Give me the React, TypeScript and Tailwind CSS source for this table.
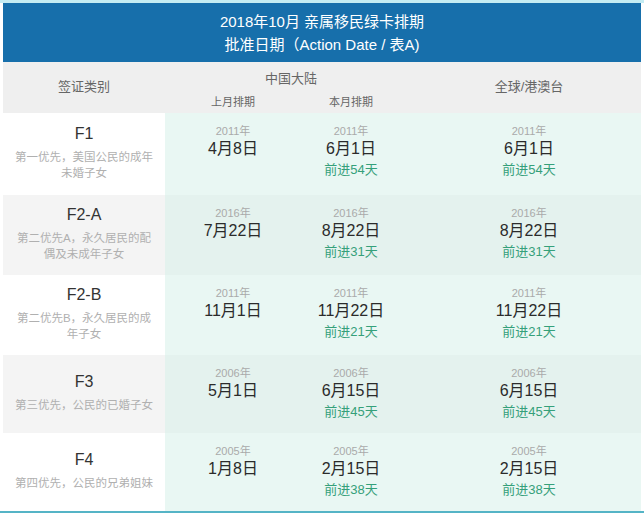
import React from "react";

type Cell = { year: string; date: string; adv?: string };
type Row = { code: string; desc: string; prev: Cell; curr: Cell; world: Cell; h: string };

const rows: Row[] = [
  {
    code: "F1",
    desc: "第一优先，美国公民的成年未婚子女",
    prev: { year: "2011年", date: "4月8日" },
    curr: { year: "2011年", date: "6月1日", adv: "前进54天" },
    world: { year: "2011年", date: "6月1日", adv: "前进54天" },
    h: "h-[82px]",
  },
  {
    code: "F2-A",
    desc: "第二优先A，永久居民的配偶及未成年子女",
    prev: { year: "2016年", date: "7月22日" },
    curr: { year: "2016年", date: "8月22日", adv: "前进31天" },
    world: { year: "2016年", date: "8月22日", adv: "前进31天" },
    h: "h-[80px]",
  },
  {
    code: "F2-B",
    desc: "第二优先B，永久居民的成年子女",
    prev: { year: "2011年", date: "11月1日" },
    curr: { year: "2011年", date: "11月22日", adv: "前进21天" },
    world: { year: "2011年", date: "11月22日", adv: "前进21天" },
    h: "h-[80px]",
  },
  {
    code: "F3",
    desc: "第三优先，公民的已婚子女",
    prev: { year: "2006年", date: "5月1日" },
    curr: { year: "2006年", date: "6月15日", adv: "前进45天" },
    world: { year: "2006年", date: "6月15日", adv: "前进45天" },
    h: "h-[78px]",
  },
  {
    code: "F4",
    desc: "第四优先，公民的兄弟姐妹",
    prev: { year: "2005年", date: "1月8日" },
    curr: { year: "2005年", date: "2月15日", adv: "前进38天" },
    world: { year: "2005年", date: "2月15日", adv: "前进38天" },
    h: "h-[78px]",
  },
];

function DateCell({ cell, extra = "" }: { cell: Cell; extra?: string }) {
  return (
    <div className={`flex flex-col items-center pt-[11px] ${extra}`}>
      <span className="text-[11px] leading-[14px] text-[#aaa]">{cell.year}</span>
      <span className="text-[16px] leading-[22px] text-[#2b2b2b]">{cell.date}</span>
      {cell.adv && (
        <span className="text-[13px] leading-[20px] text-[#35a07a]">{cell.adv}</span>
      )}
    </div>
  );
}

export default function App() {
  return (
    <div
      className="w-[644px] h-[515px] overflow-hidden bg-white border-t-[3px] border-[#c4ecf3] px-[3px]"
      style={{ fontFamily: '"Liberation Sans", "Noto Sans CJK SC", sans-serif' }}
    >
      {/* Title band */}
      <div className="h-[59px] bg-[#176fab] flex flex-col items-center justify-center text-white text-[15px] leading-[23px]">
        <div>2018年10月 亲属移民绿卡排期</div>
        <div>批准日期（Action Date / 表A)</div>
      </div>

      {/* Column header */}
      <div className="h-[51px] bg-[#efefef] grid grid-cols-[162px_136px_100px_1fr] text-[#666]">
        <div className="flex items-center justify-center text-[13px] pb-[2px]">签证类别</div>
        <div className="col-span-2 grid grid-cols-[136px_100px] grid-rows-[auto_auto]">
          <div className="col-span-2 text-center text-[13px] leading-[18px] pt-[8px] pl-[16px]">中国大陆</div>
          <div className="text-center text-[11px] leading-[18px] pt-[2px]">上月排期</div>
          <div className="text-center text-[11px] leading-[18px] pt-[2px]">本月排期</div>
        </div>
        <div className="flex items-center justify-center text-[13px] pl-[16px] pb-[2px]">全球/港澳台</div>
      </div>

      {/* Rows */}
      {rows.map((r, i) => (
        <div key={r.code} className={`grid grid-cols-[162px_136px_100px_1fr] ${r.h}`}>
          <div
            className={`flex flex-col items-center justify-center pb-[4px] ${
              i % 2 === 1 ? "bg-[#f4f4f4]" : "bg-white"
            }`}
          >
            <span className="text-[16px] leading-[22px] text-[#333]">{r.code}</span>
            <span className="mt-[4px] w-[140px] text-center text-[11.5px] leading-[16px] text-[#b0b0b0]">
              {r.desc}
            </span>
          </div>
          <div
            className={`col-span-3 grid grid-cols-[136px_100px_1fr] ${
              i % 2 === 1 ? "bg-[#e4f2ee]" : "bg-[#e9f7f3]"
            }`}
          >
            <DateCell cell={r.prev} />
            <DateCell cell={r.curr} />
            <DateCell cell={r.world} extra="pl-[16px]" />
          </div>
        </div>
      ))}
      <div className="h-[2px] bg-[#55b4c6] -mx-[3px]" />
    </div>
  );
}
